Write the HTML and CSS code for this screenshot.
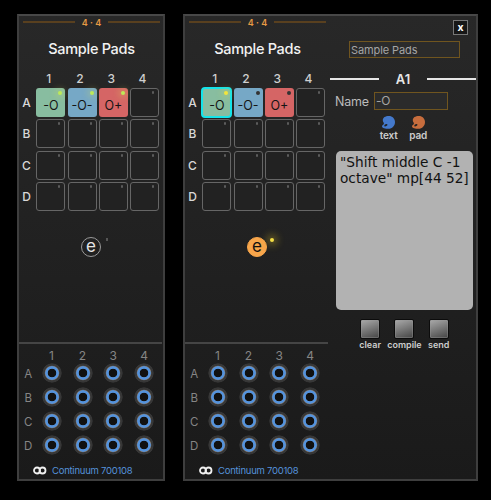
FILE: index.html
```
<!DOCTYPE html>
<html lang="en">
<head>
    <meta charset="UTF-8">
    <title>Sample Pads</title>
    <link rel="stylesheet" href="styles.css">
</head>
<body>

    <div class="module">
        <div class="face">
            <div class="preset">4 · 4</div>
            <h1>Sample Pads</h1>
            <div class="columns"><span>1</span><span>2</span><span>3</span><span>4</span></div>
            <div class="pads">
                <b>A</b><div class="pad green lit">-O</div><div class="pad blue lit">-O-</div><div class="pad red lit">O+</div><div class="pad"></div>
                <b>B</b><div class="pad"></div><div class="pad"></div><div class="pad"></div><div class="pad"></div>
                <b>C</b><div class="pad"></div><div class="pad"></div><div class="pad"></div><div class="pad"></div>
                <b>D</b><div class="pad"></div><div class="pad"></div><div class="pad"></div><div class="pad"></div>
            </div>
            <div class="edit"><span>e</span></div>
            <div class="divider"></div>
            <div class="columns dim"><span>1</span><span>2</span><span>3</span><span>4</span></div>
            <div class="jacks">
                <b>A</b><i></i><i></i><i></i><i></i>
                <b>B</b><i></i><i></i><i></i><i></i>
                <b>C</b><i></i><i></i><i></i><i></i>
                <b>D</b><i></i><i></i><i></i><i></i>
            </div>
            <div class="device">
                <svg width="14" height="10" viewBox="0 0 14 10"><circle cx="4" cy="4.5" r="3"/><circle cx="9.5" cy="4.5" r="3"/></svg>
                <span>Continuum 700108</span>
            </div>
        </div>
    </div>

    <div class="module open">
        <div class="face">
            <div class="preset">4 · 4</div>
            <h1>Sample Pads</h1>
            <div class="columns"><span>1</span><span>2</span><span>3</span><span>4</span></div>
            <div class="pads">
                <b>A</b><div class="pad green selected">-O</div><div class="pad blue">-O-</div><div class="pad red">O+</div><div class="pad"></div>
                <b>B</b><div class="pad"></div><div class="pad"></div><div class="pad"></div><div class="pad"></div>
                <b>C</b><div class="pad"></div><div class="pad"></div><div class="pad"></div><div class="pad"></div>
                <b>D</b><div class="pad"></div><div class="pad"></div><div class="pad"></div><div class="pad"></div>
            </div>
            <div class="edit on"><span>e</span></div>
            <div class="divider"></div>
            <div class="columns dim"><span>1</span><span>2</span><span>3</span><span>4</span></div>
            <div class="jacks">
                <b>A</b><i></i><i></i><i></i><i></i>
                <b>B</b><i></i><i></i><i></i><i></i>
                <b>C</b><i></i><i></i><i></i><i></i>
                <b>D</b><i></i><i></i><i></i><i></i>
            </div>
            <div class="device">
                <svg width="14" height="10" viewBox="0 0 14 10"><circle cx="4" cy="4.5" r="3"/><circle cx="9.5" cy="4.5" r="3"/></svg>
                <span>Continuum 700108</span>
            </div>
        </div>

        <div class="editor">
            <div class="close">x</div>
            <div class="field title-field">Sample Pads</div>
            <h2>A1</h2>
            <div class="name-row">
                <span class="name-label">Name</span>
                <div class="field name-field">-O</div>
            </div>
            <div class="colors">
                <div class="swatch text-color">
                    <svg width="13" height="13" viewBox="0 0 13 13"><path d="M6.8 0C10.500 0 13 2.700 13 6C13 9.800 10.200 12.800 6.500 12.800C3.500 12.800 0 12.300 0 10.500C0 9 1.500 9 1.900 7.800C2.200 6.700.8 6 .8 4.200C.8 1.600 3.300 0 6.800 0Z"/><ellipse class="hole" cx="3.900" cy="9.200" rx="1.700" ry="1" transform="rotate(-25 3.900 9.200)"/></svg>
                    <span>text</span>
                </div>
                <div class="swatch pad-color">
                    <svg width="13" height="13" viewBox="0 0 13 13"><path d="M6.8 0C10.500 0 13 2.700 13 6C13 9.800 10.200 12.800 6.500 12.800C3.500 12.800 0 12.300 0 10.500C0 9 1.500 9 1.900 7.800C2.200 6.700.8 6 .8 4.200C.8 1.600 3.300 0 6.800 0Z"/><ellipse class="hole" cx="3.900" cy="9.200" rx="1.700" ry="1" transform="rotate(-25 3.900 9.200)"/></svg>
                    <span>pad</span>
                </div>
            </div>
            <div class="code">"Shift middle C -1<br>octave" mp[44 52]</div>
            <div class="actions">
                <div class="action"><button></button><span>clear</span></div>
                <div class="action"><button></button><span>compile</span></div>
                <div class="action"><button></button><span>send</span></div>
            </div>
        </div>
    </div>

</body>
</html>
```
FILE: styles.css
```
* {
    box-sizing: border-box;
}

body {
    margin: 0;
    height: 500px;
    padding: 14px 0 0 17px;
    display: flex;
    align-items: flex-start;
    gap: 18px;
    background: #000;
    color: #e6e6e6;
    font-family: Inter, "Liberation Sans", sans-serif;
    overflow: hidden;
}

.module {
    display: flex;
    width: 148px;
    height: 467px;
    border: 2px solid #3e3e3e;
    border-top-color: #484848;
    background: linear-gradient(#282828, #1a1a1a);
}

.module.open {
    width: 295px;
}

.face {
    width: 144px;
    flex: none;
}

.preset {
    display: flex;
    align-items: center;
    justify-content: center;
    gap: 7px;
    height: 12px;
    margin: 0 3px 0 4px;
    color: #e69a45;
    font-size: 9px;
    font-weight: 600;
    white-space: nowrap;
}

.preset::before,
.preset::after {
    content: "";
    flex: 1;
    height: 2px;
    background: #59401f;
}

h1 {
    margin: 10px 0 0 1px;
    font-size: 14.5px;
    font-weight: 500;
    line-height: 21px;
    letter-spacing: -0.3px;
    text-align: center;
    color: #f2f2f2;
}

.columns {
    display: grid;
    grid-template-columns: repeat(4, 31.3px);
    height: 14px;
    margin: 12px 0 0 14px;
    font-size: 12px;
    font-weight: 500;
    line-height: 15px;
    text-align: center;
    color: #cfcfcf;
}

.columns.dim {
    grid-template-columns: repeat(4, 30.9px);
    margin: 4px 0 0 17px;
    font-weight: 400;
    line-height: 16px;
    color: #858585;
}

.pads {
    display: grid;
    grid-template-columns: 15px repeat(4, 29px);
    grid-auto-rows: 29px;
    gap: 2.3px;
    margin-top: 3px;
}

.pads b {
    font-size: 12px;
    font-weight: 500;
    line-height: 30px;
    text-align: center;
    color: #d8d8d8;
}

.pad {
    position: relative;
    border: 1px solid #666;
    border-radius: 3px;
    background: #222;
    color: #151515;
    font-size: 12.5px;
    line-height: 33px;
    text-align: center;
}

/* status led in the pad corner */
.pad::after {
    content: "";
    position: absolute;
    top: 2px;
    right: 4px;
    width: 2px;
    height: 3px;
    border-radius: 1px;
    background: #5c5c5c;
}

.pad.green,
.pad.blue,
.pad.red {
    border-color: transparent;
    background-clip: border-box;
}

.pad.green { background: #88bda0; }
.pad.blue { background: #76a8c6; }
.pad.red { background: #d56565; }

.pad.green::after,
.pad.blue::after,
.pad.red::after {
    right: 2px;
    width: 4px;
    height: 4px;
    border-radius: 50%;
    background: #333;
}

.pad.lit::after,
.pad.selected::after {
    box-shadow: 0 0 6px 3px rgba(215, 220, 90, 0.25);
}

.pad.green.lit::after,
.pad.blue.lit::after,
.pad.red.lit::after {
    background: #bde957;
}

.pad.selected {
    outline: 2px solid #14e4ea;
    outline-offset: -1px;
}

.pad.green.selected::after {
    background: #f4e43b;
}

.edit {
    position: relative;
    width: 20px;
    height: 20px;
    margin: 26px 0 0 62px;
    border: 1px solid #999;
    border-radius: 50%;
    font-size: 17px;
    line-height: 16px;
    text-align: center;
}

.edit::after {
    content: "";
    position: absolute;
    top: 0;
    left: 24px;
    width: 2px;
    height: 3px;
    background: #555;
}

.edit.on {
    border-color: #f8a64b;
    background: #f8a64b;
    color: #111;
}

.edit.on::after {
    left: 22px;
    width: 4px;
    height: 4px;
    border-radius: 50%;
    background: #f5df45;
    box-shadow: 0 0 7px 4px rgba(220, 190, 40, 0.3);
}

.divider {
    height: 2px;
    margin: 85px 1px 0 0;
    background: #454545;
}

.jacks {
    display: grid;
    grid-template-columns: 17.5px repeat(4, 30.8px);
    grid-auto-rows: 20px;
    row-gap: 4px;
    margin-top: 1px;
    justify-items: center;
}

.jacks b {
    padding-left: 1px;
    font-size: 11.5px;
    font-weight: 400;
    line-height: 23px;
    color: #858585;
}

.jacks i {
    width: 20px;
    height: 20px;
    border-radius: 50%;
    background: radial-gradient(circle closest-side, #111 4px, #5593dc 4.6px, #5593dc 6.4px, #77706a 7px, #383838 7.6px, #363636 9.3px, transparent 10px);
}

.device {
    display: flex;
    align-items: center;
    gap: 5px;
    height: 14px;
    margin: 9px 0 0 14px;
    font-size: 9.5px;
    letter-spacing: -0.25px;
    white-space: nowrap;
    color: #5592da;
}

.device svg {
    fill: none;
    stroke: #f0f0f0;
    stroke-width: 1.8;
}

.editor {
    flex: 1;
    display: flex;
    flex-direction: column;
    padding-left: 2px;
}

.close {
    align-self: flex-end;
    width: 15px;
    height: 15px;
    margin: 4px 8px 0 0;
    border: 1px solid #777;
    background: #171717;
    color: #fff;
    font-size: 10.5px;
    font-weight: 700;
    line-height: 13px;
    text-align: center;
}

.field {
    border: 1px solid #70551f;
    background: #2b2b2b;
    color: #a5a5a5;
    padding-left: 1px;
    font-size: 11px;
    line-height: 16px;
    white-space: nowrap;
}

.title-field {
    width: 111px;
    height: 17px;
    margin: 6px 0 0 18px;
    letter-spacing: -0.1px;
}

h2 {
    display: flex;
    align-items: center;
    justify-content: space-between;
    height: 16px;
    margin: 13px 0 0 -1px;
    font-size: 13px;
    font-weight: 600;
}

h2::before,
h2::after {
    content: "";
    width: 49px;
    height: 2px;
    background: #e6e6e6;
}

.name-row {
    display: flex;
    align-items: center;
    gap: 5px;
    height: 18px;
    margin: 5px 0 0 4px;
    font-size: 12.5px;
    letter-spacing: -0.2px;
}

.name-label {
    width: 34px;
    color: #bbb;
}

.name-field {
    width: 74px;
    height: 18px;
    font-size: 12px;
}

.colors {
    display: flex;
    margin: 6px 0 0 43px;
}

.swatch {
    display: flex;
    flex-direction: column;
    align-items: center;
    width: 29.5px;
    font-size: 10px;
    font-weight: 600;
    line-height: 13px;
    letter-spacing: -0.1px;
    color: #ccc;
}

.text-color { fill: #4479cb; }
.pad-color { fill: #c76d3d; }

.hole {
    fill: #202020;
}

.code {
    width: 137px;
    height: 159px;
    margin: 9px 0 0 5px;
    padding: 3px 0 0 4px;
    border-radius: 5px;
    background: #b2b2b2;
    color: #111;
    font: 13.7px/16px "DejaVu Sans", sans-serif;
    white-space: nowrap;
}

.actions {
    display: flex;
    margin: 9px 0 0 22px;
}

.action {
    display: flex;
    flex-direction: column;
    align-items: center;
    width: 34.3px;
    font-size: 9px;
    font-weight: 600;
    line-height: 12px;
    color: #ccc;
}

.action button {
    width: 20px;
    height: 20px;
    padding: 0;
    border: 1.5px solid #0c0c0c;
    border-radius: 2px;
    background: linear-gradient(160deg, #aaa, #777 50%, #444);
    box-shadow: inset 0 0 0 1px rgba(150, 150, 150, 0.4);
}
```
